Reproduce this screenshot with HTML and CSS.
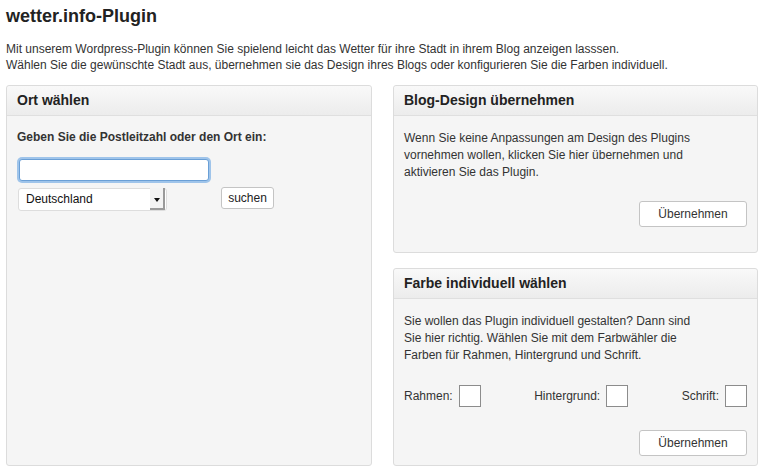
FILE: index.html
```html
<!DOCTYPE html>
<html lang="de">
<head>
    <meta charset="UTF-8">
    <meta name="viewport" content="width=device-width, initial-scale=1.0">
    <title>wetter.info-Plugin</title>
    <link rel="stylesheet" href="styles.css">
</head>
<body>
    <h1 class="title">wetter.info-Plugin</h1>
    <p class="intro">Mit unserem Wordpress-Plugin können Sie spielend leicht das Wetter für ihre Stadt in ihrem Blog anzeigen lasssen.<br>Wählen Sie die gewünschte Stadt aus, übernehmen sie das Design ihres Blogs oder konfigurieren Sie die Farben individuell.</p>

    <div class="panels">
        <section class="panel panel-ort">
            <h2 class="panel-head">Ort wählen</h2>
            <div class="panel-body">
                <label class="ort-label" for="ort">Geben Sie die Postleitzahl oder den Ort ein:</label>
                <input type="text" id="ort" class="ort-input" autofocus>
                <div class="ort-row">
                    <div class="select-wrap">
                        <select class="land">
                            <option>Deutschland</option>
                            <option>Österreich</option>
                            <option>Schweiz</option>
                        </select>
                        <span class="select-arrow"></span>
                    </div>
                    <button type="button" class="btn btn-small">suchen</button>
                </div>
            </div>
        </section>

        <section class="panel">
            <h2 class="panel-head">Blog-Design übernehmen</h2>
            <div class="panel-body">
                <p class="panel-text">Wenn Sie keine Anpassungen am Design des Plugins vornehmen wollen, klicken Sie hier übernehmen und aktivieren Sie das Plugin.</p>
                <div class="actions">
                    <button type="button" class="btn">Übernehmen</button>
                </div>
            </div>
        </section>

        <section class="panel">
            <h2 class="panel-head">Farbe individuell wählen</h2>
            <div class="panel-body">
                <p class="panel-text">Sie wollen das Plugin individuell gestalten? Dann sind Sie hier richtig. Wählen Sie mit dem Farbwähler die Farben für Rahmen, Hintergrund und Schrift.</p>
                <div class="colors">
                    <label class="color-field">Rahmen: <span class="swatch"></span></label>
                    <label class="color-field">Hintergrund: <span class="swatch"></span></label>
                    <label class="color-field">Schrift: <span class="swatch"></span></label>
                </div>
                <div class="actions actions-color">
                    <button type="button" class="btn">Übernehmen</button>
                </div>
            </div>
        </section>
    </div>
</body>
</html>
```

FILE: styles.css
```css
body {
    margin: 0;
    padding: 0 12px 0 6px;
    font-family: "Liberation Sans", Arial, sans-serif;
    font-size: 12px;
    color: #333;
    background-color: #fff;
}
.title {
    margin: 0;
    padding-top: 6px;
    font-size: 18px;
    line-height: 21px;
    color: #222;
}
.intro {
    margin: 14px 0 0;
    line-height: 16px;
    color: #333;
}
.panels {
    display: grid;
    grid-template-columns: 366px 365px;
    grid-template-rows: auto auto;
    column-gap: 21px;
    row-gap: 15px;
    margin-top: 12px;
}
.panel {
    background-color: #f5f5f5;
    border: 1px solid #dcdcdc;
    border-radius: 3px;
}
.panel-ort {
    grid-row: 1 / 3;
}
.panel-head {
    margin: 0;
    height: 29px;
    padding: 0 10px;
    line-height: 29px;
    font-size: 14px;
    color: #222;
    background: linear-gradient(#f9f9f9, #ececec);
    border-bottom: 1px solid #dfdfdf;
    border-radius: 3px 3px 0 0;
}
.panel-body {
    padding: 14px 10px 25px 10px;
}
.panel-text {
    margin: 0;
    width: 300px;
    line-height: 17px;
}

/* Ort wählen */
.ort-label {
    display: block;
    font-weight: bold;
    line-height: 15px;
}
.ort-input {
    display: block;
    box-sizing: border-box;
    width: 190px;
    height: 22px;
    margin: 14px 0 0 2px;
    padding: 2px 6px;
    font: 12px "Liberation Sans", Arial, sans-serif;
    border: 1px solid #6a9fd6;
    border-radius: 3px;
    outline: none;
    box-shadow: 0 0 0 2px #9fc4ea;
    background: #fff;
}
.ort-row {
    display: flex;
    align-items: flex-start;
    margin-top: 7px;
}
.select-wrap {
    position: relative;
    width: 149px;
    height: 23px;
    margin-left: 1px;
}
.land {
    -webkit-appearance: none;
    appearance: none;
    box-sizing: border-box;
    width: 149px;
    height: 23px;
    padding: 0 20px 2px 7px;
    font: 12px "Liberation Sans", Arial, sans-serif;
    color: #111;
    background: #fff;
    border: 1px solid #ddd;
    border-radius: 3px;
}
.select-arrow {
    position: absolute;
    top: 0;
    right: 2px;
    width: 15px;
    height: 22px;
    background: #f3f3f3;
    border-right: 2px solid #9a9a9a;
    border-bottom: 2px solid #9a9a9a;
    box-sizing: border-box;
    pointer-events: none;
}
.select-arrow::after {
    content: "";
    position: absolute;
    left: 4px;
    top: 10px;
    border-left: 3px solid transparent;
    border-right: 3px solid transparent;
    border-top: 4px solid #111;
}
.btn {
    box-sizing: border-box;
    width: 108px;
    height: 26px;
    padding: 0;
    font: 12px "Liberation Sans", Arial, sans-serif;
    color: #333;
    background: #fff;
    border: 1px solid #c4c4c4;
    border-radius: 3px;
    cursor: pointer;
}
.btn-small {
    width: 53px;
    height: 22px;
    margin: -1px 0 0 54px;
    color: #222;
}

/* Buttons rechts */
.actions {
    display: flex;
    justify-content: flex-end;
    margin-top: 20px;
}
.actions-color {
    margin-top: 23px;
}
.panel:last-child .panel-body {
    padding-bottom: 9px;
}

/* Farbauswahl */
.colors {
    display: flex;
    justify-content: space-between;
    margin-top: 21px;
}
.color-field {
    display: flex;
    align-items: center;
    gap: 6px;
    line-height: 22px;
}
.swatch {
    display: inline-block;
    box-sizing: border-box;
    width: 22px;
    height: 22px;
    background: #fff;
    border: 1px solid #8c8c8c;
}
```
